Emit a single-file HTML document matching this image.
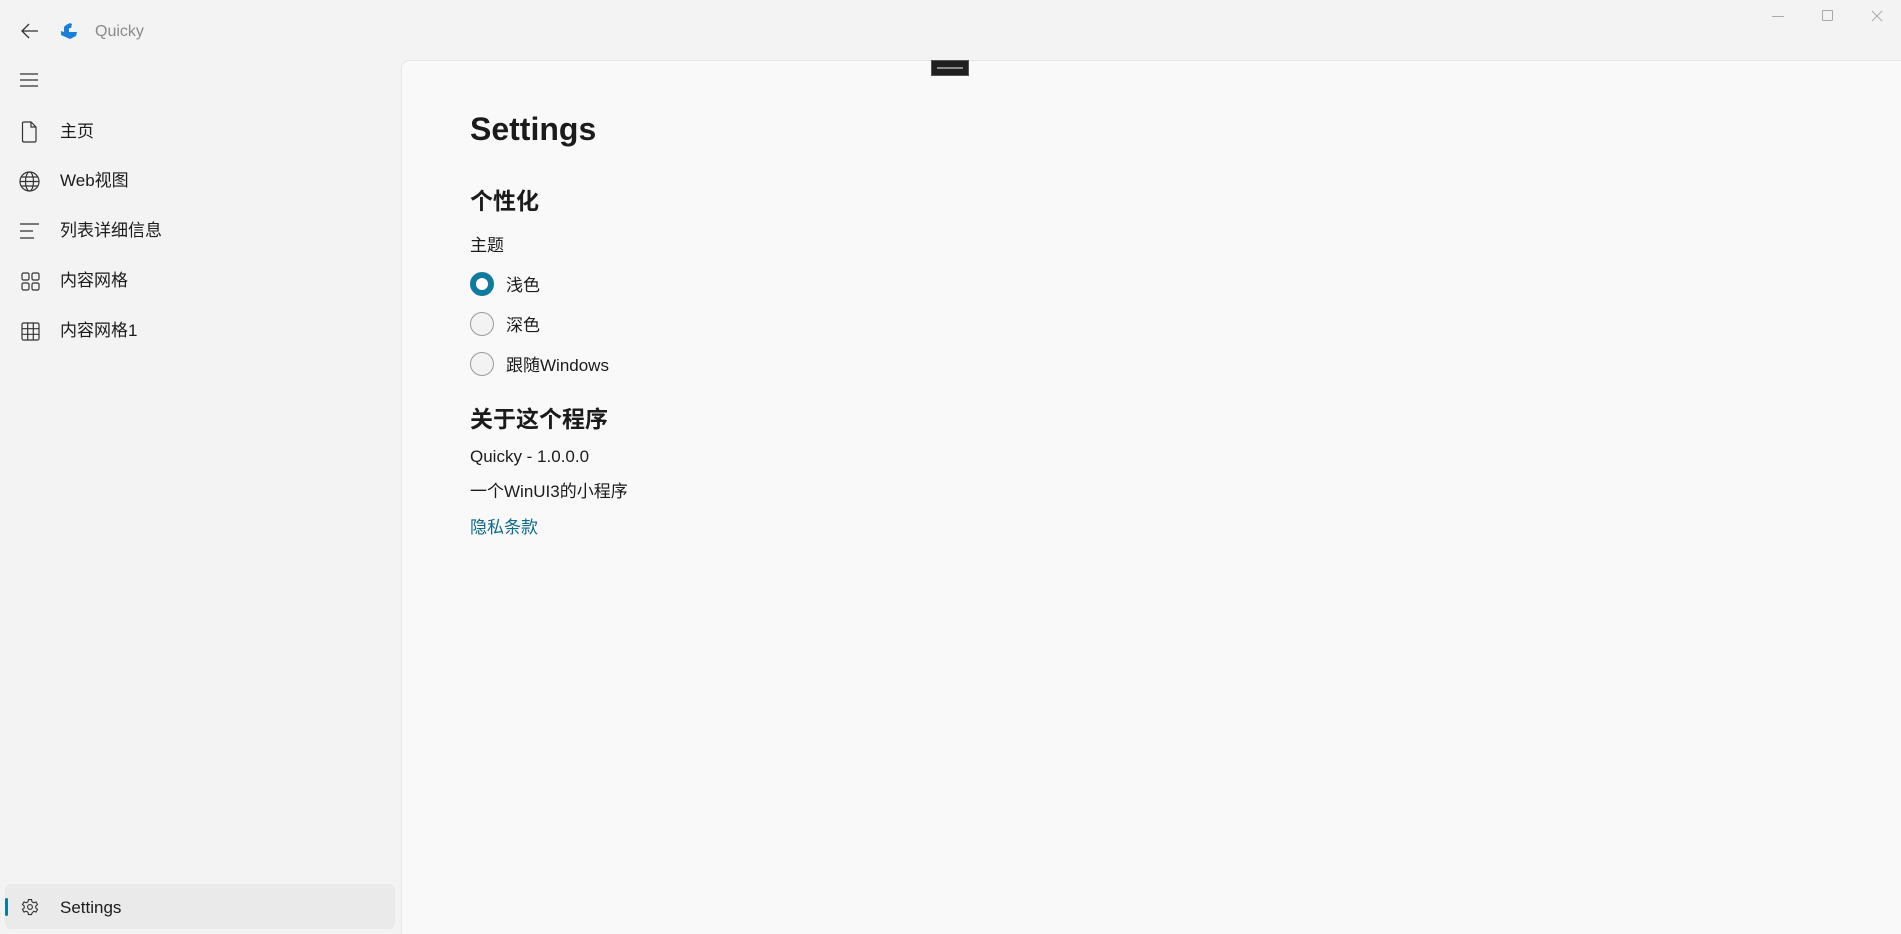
<!DOCTYPE html>
<html><head><meta charset="utf-8"><style>
*{margin:0;padding:0;box-sizing:border-box}
body{width:1901px;height:934px;background:#f3f3f3;font-family:"Segoe UI","Liberation Sans","Noto Sans CJK SC",sans-serif;color:#1b1b1b;position:relative;overflow:hidden}
.abs{position:absolute}
.nav{position:absolute;left:60px;font-size:17px;line-height:24px;color:#1b1b1b}
.ic{position:absolute;left:19px}
.content{position:absolute;left:401px;top:60px;width:1500px;height:874px;background:#f9f9f9;border-left:1px solid #e5e5e5;border-top:1px solid #e5e5e5;border-top-left-radius:8px}
.t{position:absolute;left:470px;white-space:nowrap}
.radio{position:absolute;left:470px;width:24px;height:24px;border-radius:50%;border:1.5px solid #9a9a9a;background:#f3f3f3}
</style></head><body>
<svg class="abs" style="left:20px;top:22px" width="20" height="18" viewBox="0 0 20 18"><path d="M18 9H2M9 2L2 9l7 7" fill="none" stroke="#333" stroke-width="1.3"/></svg>
<svg class="abs" style="left:60px;top:22px" width="20" height="18" viewBox="0 0 20 18"><path d="M6 3l4-2 2 1v4l-3 1v3h8l-1 4-6 3-9-4v-4l3 1v-5z" fill="#1a7fd6"/><path d="M9 7l3-1v-3" fill="none" stroke="#fff" stroke-width="1"/></svg>
<div class="abs" style="left:95px;top:23px;font-size:16px;color:#8a8a8a">Quicky</div>
<div class="abs" style="left:1772px;top:16px;width:12px;height:1px;background:#aaa"></div>
<div class="abs" style="left:1822px;top:10px;width:11px;height:11px;border:1px solid #aaa;border-radius:1px"></div>
<svg class="abs" style="left:1871px;top:10px" width="12" height="12" viewBox="0 0 12 12"><path d="M1 1l10 10M11 1L1 11" stroke="#aaa" stroke-width="1"/></svg>
<svg class="ic" style="top:72px" width="20" height="16" viewBox="0 0 20 16"><path d="M1 2h18M1 8h18M1 14h18" stroke="#333" stroke-width="1.3"/></svg>
<svg class="ic" style="top:121px;left:21px" width="16" height="22" viewBox="0 0 16 22"><path d="M1.5 2.5q0-1.5 1.5-1.5h7l5 5v13.5q0 1.5-1.5 1.5h-10.5q-1.5 0-1.5-1.5z M10 1v5h5" fill="none" stroke="#333" stroke-width="1.2"/></svg>
<div class="nav" style="top:120px">主页</div>
<svg class="ic" style="top:171px" width="21" height="21" viewBox="0 0 21 21"><g fill="none" stroke="#333" stroke-width="1.2"><circle cx="10.5" cy="10.5" r="9.5"/><ellipse cx="10.5" cy="10.5" rx="4" ry="9.5"/><path d="M1 10.5h19M2.5 6h16M2.5 15h16"/></g></svg>
<div class="nav" style="top:169px">Web视图</div>
<svg class="ic" style="top:222px" width="21" height="18" viewBox="0 0 21 18"><path d="M1 2h19M1 9h13M1 16h14" stroke="#333" stroke-width="1.3"/></svg>
<div class="nav" style="top:219px">列表详细信息</div>
<svg class="ic" style="top:272px;left:21px" width="19" height="19" viewBox="0 0 19 19"><g fill="none" stroke="#333" stroke-width="1.2"><rect x="1" y="1" width="7" height="7" rx="1.5"/><rect x="11" y="1" width="7" height="7" rx="1.5"/><rect x="1" y="11" width="7" height="7" rx="1.5"/><rect x="11" y="11" width="7" height="7" rx="1.5"/></g></svg>
<div class="nav" style="top:269px">内容网格</div>
<svg class="ic" style="top:322px;left:21px" width="19" height="19" viewBox="0 0 19 19"><g fill="none" stroke="#333" stroke-width="1.2"><rect x="1" y="1" width="17" height="17" rx="1.5"/><path d="M6.7 1v17M12.3 1v17M1 6.7h17M1 12.3h17"/></g></svg>
<div class="nav" style="top:319px">内容网格1</div>
<div class="abs" style="left:5px;top:884px;width:390px;height:45px;background:#eaeaea;border-radius:6px"></div>
<div class="abs" style="left:5px;top:898px;width:3px;height:18px;background:#0f7b9e;border-radius:2px"></div>
<svg class="abs" style="left:21px;top:898px" width="18" height="18" viewBox="0 0 24 24"><g fill="none" stroke="#333" stroke-width="1.5"><circle cx="12" cy="12" r="3.2"/><path d="M10 2h4l.7 3 2.3 1.3 3-1 2 3.4-2.3 2.1v2.4l2.3 2.1-2 3.4-3-1L14.7 20l-.7 2h-4l-.7-3L7 17.7l-3 1-2-3.4 2.3-2.1v-2.4L2 8.7l2-3.4 3 1L9.3 5z"/></g></svg>
<div class="nav" style="top:896px">Settings</div>
<div class="content"></div>
<div class="abs" style="left:931px;top:60px;width:38px;height:16px;background:#202020;border:1px solid #555"></div>
<div class="abs" style="left:937px;top:67px;width:26px;height:2px;border-top:1px solid #888;border-bottom:1px solid #888"></div>
<div class="t" style="top:111px;font-size:32px;font-weight:600">Settings</div>
<div class="t" style="top:182px;font-size:23px;font-weight:700">个性化</div>
<div class="t" style="top:231px;font-size:17px">主题</div>
<div class="radio" style="top:272px;border:6px solid #0f7b9e;background:#fff"></div>
<div class="t" style="left:506px;top:271px;font-size:17px">浅色</div>
<div class="radio" style="top:312px"></div>
<div class="t" style="left:506px;top:311px;font-size:17px">深色</div>
<div class="radio" style="top:352px"></div>
<div class="t" style="left:506px;top:351px;font-size:17px">跟随Windows</div>
<div class="t" style="top:400px;font-size:23px;font-weight:700">关于这个程序</div>
<div class="t" style="top:447px;font-size:17px">Quicky - 1.0.0.0</div>
<div class="t" style="top:477px;font-size:17px">一个WinUI3的小程序</div>
<div class="t" style="top:513px;font-size:17px;color:#0e6a8a">隐私条款</div>
</body></html>
